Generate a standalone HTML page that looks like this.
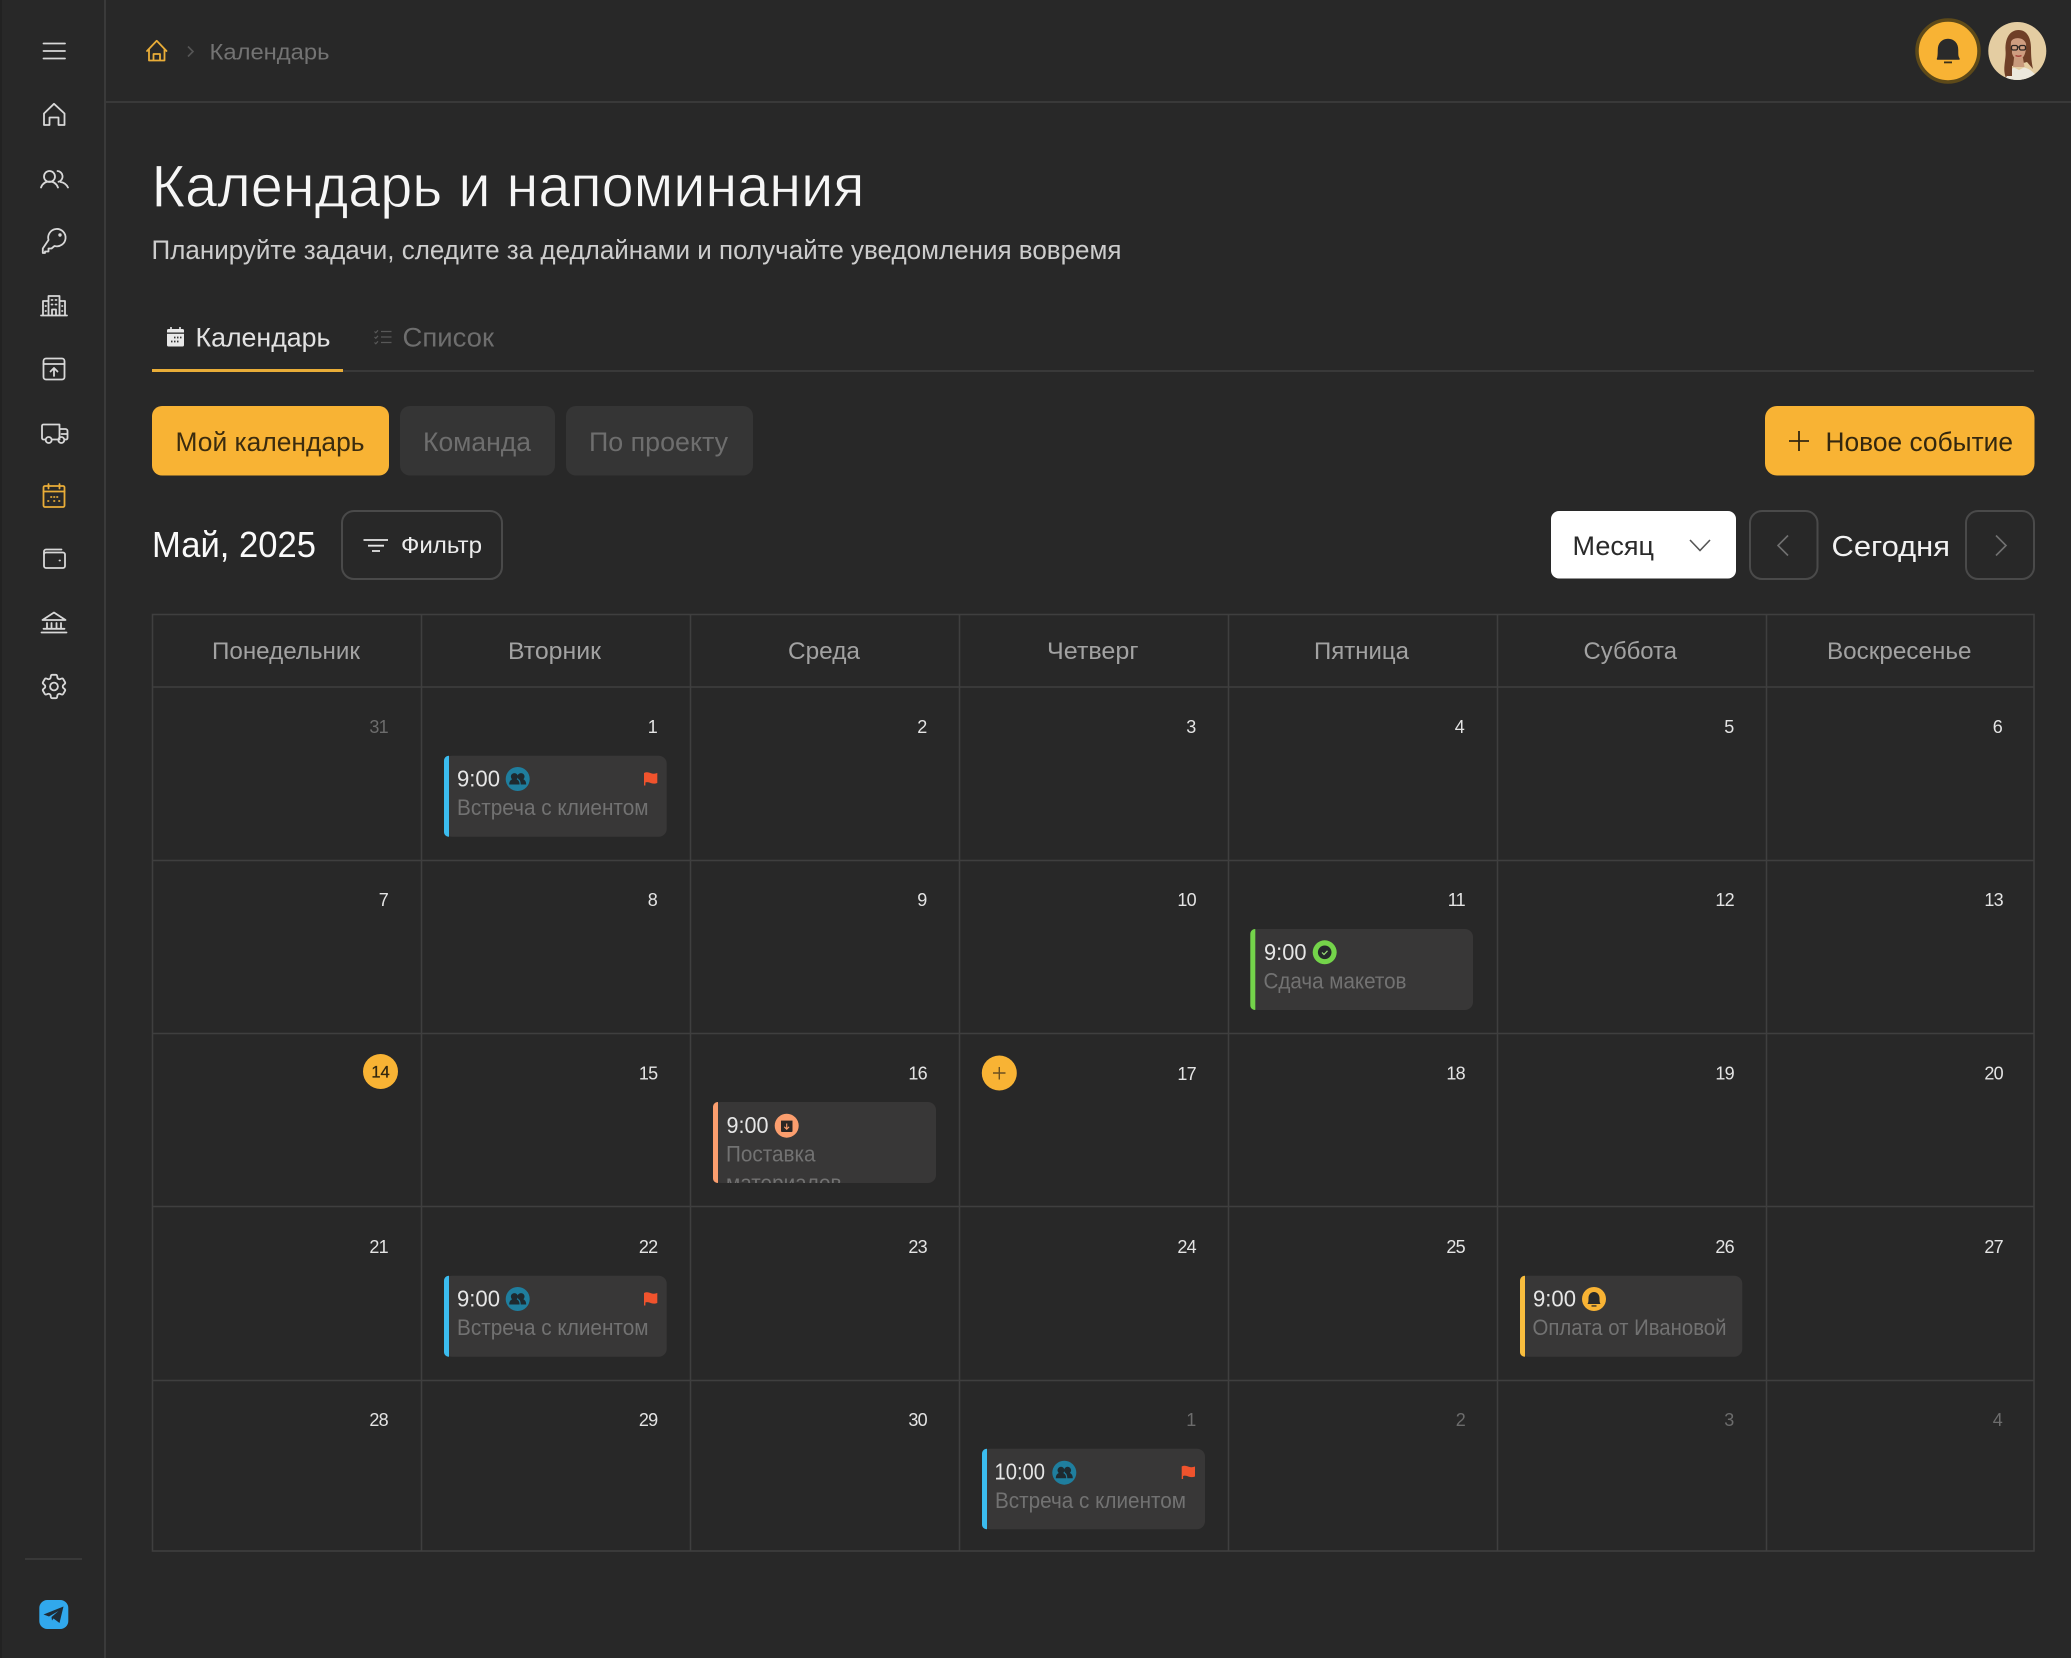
<!DOCTYPE html>
<html lang="ru"><head><meta charset="utf-8"><title>Календарь и напоминания</title>
<style>
html,body{margin:0;padding:0;background:#282828;width:2071px;height:1658px;overflow:hidden}
svg{display:block}
text{font-family:"Liberation Sans","Noto Sans CJK SC",sans-serif}
.ic{fill:none;stroke:#d8d8d8;stroke-width:1.8;stroke-linecap:round;stroke-linejoin:round}
.am{fill:none;stroke:#e9ad38;stroke-width:1.8;stroke-linecap:round;stroke-linejoin:round}
.ln{stroke:#3f3f3f;stroke-width:1.6}
.dh{font-size:24.5px;fill:#a2a2a2}
.n{font-size:18px;fill:#e4e4e4;text-anchor:end;letter-spacing:-.7px}
.m{font-size:18px;fill:#6c6c6c;text-anchor:end;letter-spacing:-.7px}
.tm{font-size:23px;fill:#e6e6e6}
.et{font-size:22px;fill:#727272}
.card{fill:#383737}
</style></head><body>
<svg xmlns="http://www.w3.org/2000/svg" width="2071" height="1658" viewBox="0 0 2071 1658">
<defs>
<clipPath id="av"><circle cx="2017.3" cy="51" r="29"/></clipPath>
<clipPath id="c3"><rect x="713" y="1102" width="223" height="81" rx="8"/></clipPath>
<g id="ppl"><circle cx="-3.300" cy="-2.400" r="3.500" fill="#1e2a30"/><circle cx="3.300" cy="-2.400" r="3.500" fill="#1e2a30"/><path d="M-8.500 5.500c0-4 2.300-5.500 5.200-5.500S1.900 1.500 1.900 5.500zM3 5.500c0-2-.5-4-1.700-5.200.7-.2 1.500-.3 2.300-.3 2.700 0 4.900 1.500 4.900 5.500z" fill="#1e2a30"/></g>
<path id="flag" d="M0 0C3 -1.500 5 -.5 7 .2 9 .9 11 .9 13.300 0V10C11 10.900 9 10.800 7 10.100 5 9.400 3 8.700 1.400 9.500V12.500H0Z" fill="#f0532d"/>
</defs>
<rect width="2071" height="1658" fill="#282828"/>
<rect x="0" y="0" width="2" height="1658" fill="#222"/>

<!-- sidebar -->
<line x1="105" y1="0" x2="105" y2="1658" class="ln"/>
<line x1="106" y1="102" x2="2071" y2="102" class="ln"/>
<g class="ic">
<path d="M43.500 43.500H65M43.500 51H65M43.500 58.500H65"/>
<path d="M44 125V113.500L54 103.800 64.500 113.500V125H58.500V117.500H49.500V125Z"/>
<circle cx="49.500" cy="176.500" r="5.500"/><path d="M41 187.500c1.500-4 4.500-6 8.500-6s7 2 8.500 6M57.500 171a5.500 5.500 0 0 1 1 10.800M60.500 182c3.500.5 6 2.500 7.500 5.500"/>
<path d="M48.500 240a8.700 8.700 0 1 1 6 6l-3 2.500h-3v3h-3.500v1.500H42.800v-4.500z"/><circle cx="60" cy="235" r=".8"/>
<path d="M41 315.500H67M43 315.500V301H48.500M65 315.500V301H59.500M48.500 315.500V296H59.500V315.500M52 315.500V309.500H56V315.500M51.500 300H52.500M55.500 300H56.500M51.500 304.500H52.500M55.500 304.500H56.500M45.500 306H46M62 306H62.500M45.500 311H46M62 311H62.500"/>
<rect x="43.500" y="358.500" width="21" height="21" rx="2.500"/><path d="M43.500 364H64.500M54 376V368M50.500 371.500L54 368 57.500 371.500"/>
<path d="M45.500 439.500H43.500A1.500 1.500 0 0 1 42 438V426A1.500 1.500 0 0 1 43.500 424.500H59.500V439.500H52M59.500 429H65.500A2 2 0 0 1 67.500 431V438A1.500 1.500 0 0 1 66 439.500H65M59.500 439.500H58M67.500 434H61.500"/><circle cx="48.700" cy="440" r="3"/><circle cx="61.300" cy="440" r="3"/>
</g>
<g class="am">
<rect x="43.500" y="486" width="21" height="21" rx="1.500"/><path d="M43.500 491.500H64.500M48.500 484V488.500M59.500 484V488.500M51 497H51.500M54 497H54.500M57 497H57.500M48 501H48.500M54 501H54.500M59 501H59.500"/>
</g>
<g class="ic">
<rect x="44" y="552.500" width="21" height="15.500" rx="2"/><path d="M44 554V551.500A2 2 0 0 1 46 549.500H61.500M59.500 560.500H60"/>
<path d="M42.500 620H65.500L54 612.500ZM47 623V628M51.500 623V628M56.500 623V628M61 623V628M43.500 628.800H64.500M41.500 632.500H66.500"/>
<g transform="translate(38.400 670.900) scale(1.300)" stroke-width="1.400"><path d="M9.594 3.940c.09-.542.56-.94 1.110-.94h2.593c.55 0 1.020.398 1.110.94l.213 1.281c.063.374.313.686.645.87.074.04.147.083.22.127.324.196.72.257 1.075.124l1.217-.456a1.125 1.125 0 011.370.49l1.296 2.247a1.125 1.125 0 01-.26 1.431l-1.003.827c-.293.24-.438.613-.431.992a6.759 6.759 0 010 .255c-.007.378.138.75.43.99l1.005.828c.424.35.534.954.26 1.430l-1.298 2.247a1.125 1.125 0 01-1.369.491l-1.217-.456c-.355-.133-.75-.072-1.076.124a6.570 6.570 0 01-.22.128c-.331.183-.581.495-.644.869l-.213 1.280c-.09.543-.56.941-1.110.941h-2.594c-.55 0-1.020-.398-1.110-.94l-.213-1.281c-.062-.374-.312-.686-.644-.87a6.520 6.520 0 01-.22-.127c-.325-.196-.72-.257-1.076-.124l-1.217.456a1.125 1.125 0 01-1.369-.49l-1.297-2.247a1.125 1.125 0 01.26-1.431l1.004-.827c.292-.24.437-.613.43-.992a6.932 6.932 0 010-.255c.007-.378-.138-.75-.43-.99l-1.004-.828a1.125 1.125 0 01-.26-1.430l1.297-2.247a1.125 1.125 0 011.370-.491l1.216.456c.356.133.751.072 1.076-.124.072-.044.146-.087.22-.128.332-.183.582-.495.644-.869l.214-1.281z"/><circle cx="12" cy="12" r="3"/></g>
</g>
<line x1="25" y1="1559" x2="82" y2="1559" stroke="#3d3d3d" stroke-width="1.500"/>
<rect x="39.300" y="1600" width="29" height="29" rx="8" fill="#31a8ec"/>
<path d="M43.500 1614.500L63.500 1606.500 59.500 1623 53.500 1618.500 52 1620.500 51.500 1617 58.500 1611 49 1616.500Z" fill="#1f2c36"/>

<!-- breadcrumb -->
<path class="am" d="M147 51L156.700 40.800 166.500 51M149 49V60.500H164.500V49M153.500 60.500V54H160V60.500"/>
<path d="M188 46.500L193 51.500 188 56.500" fill="none" stroke="#555" stroke-width="1.600"/>
<text x="209.500" y="59.500" font-size="22" fill="#737373" textLength="120" lengthAdjust="spacingAndGlyphs">Календарь</text>

<!-- bell + avatar -->
<circle cx="1948" cy="51" r="31" fill="#f8b334" stroke="#5e4a19" stroke-width="3.500"/>
<path d="M1937.500 59C1938.500 57 1938.500 55 1938.500 50C1938.500 43.500 1942.500 39.500 1948 39.500S1957.500 43.500 1957.500 50C1957.500 55 1957.500 57 1959 59Z" fill="#2a2a2a" stroke="#2a2a2a" stroke-width="1.500" stroke-linejoin="round"/>
<rect x="1944" y="61.500" width="8" height="1.800" fill="#3a2f18"/>
<g clip-path="url(#av)">
<rect x="1985" y="20" width="64" height="62" fill="#e4cda2"/>
<path d="M2006 78C2002 68 2006.500 60 2005.500 50C2005 38 2010 30 2018.500 30C2027 30 2031 38 2031 48C2031 56 2031.500 62 2033 69L2027 62 2012 66Z" fill="#6f3f27"/>
<path d="M2011 42C2012 37 2024 36 2026 44C2026.500 52 2024 59 2018.500 60.500C2013 60 2010 50 2011 42Z" fill="#cf9d80"/>
<path d="M2014 58L2023 58 2024.500 67 2013 67Z" fill="#c99a7c"/>
<path d="M2005 84C2006 73 2011 69 2014 67.500L2019 70 2024 67.500C2029 68.500 2035 72 2040 82Z" fill="#ece8dd"/>
<path d="M2012 48 L2012 76 L2007 76 C2005 68 2008 58 2012 48Z" fill="#6f3f27"/>
<g fill="none" stroke="#2e2622" stroke-width="1.300"><rect x="2011.500" y="45.500" width="6" height="4.500" rx="1.500"/><rect x="2019.500" y="45.500" width="6" height="4.500" rx="1.500"/><path d="M2017.500 47H2019.500"/></g>
<path d="M2015.500 55.500Q2018.500 57 2021.500 55.500" stroke="#a8443c" stroke-width="1.500" fill="none"/>
</g>

<!-- heading -->
<text x="151.500" y="206.500" font-size="59" fill="#f6f6f6" stroke="#282828" stroke-width=".8" textLength="713" lengthAdjust="spacingAndGlyphs">Календарь и напоминания</text>
<text x="151.500" y="259" font-size="26.500" fill="#cdcdcd" textLength="970" lengthAdjust="spacingAndGlyphs">Планируйте задачи, следите за дедлайнами и получайте уведомления вовремя</text>

<!-- tabs -->
<rect x="167" y="329" width="17" height="17.500" rx="1.500" fill="#e8e8e8"/>
<path d="M171 327V331M180 327V331" stroke="#e8e8e8" stroke-width="1.600"/><rect x="167" y="332.500" width="17" height="1.300" fill="#282828"/>
<path d="M174 337.500h1.500M177 337.500h1.500M180 337.500h1.500M171 341.500h1.500M174 341.500h1.500M177 341.500h1.500" stroke="#333" stroke-width="1.800"/>
<text x="195.500" y="346.500" font-size="26.500" fill="#e2e2e2" textLength="135" lengthAdjust="spacingAndGlyphs">Календарь</text>
<path d="M381 331.500H391.500M381 337H391.500M381 342.500H391.500M374.500 331.500l1.300 1.300 2.200-2.500M374.500 337l1.300 1.300 2.200-2.500M374.500 342.500l1.300 1.300 2.200-2.500" stroke="#585858" stroke-width="1.200" fill="none"/>
<text x="402.500" y="346.500" font-size="26.500" fill="#6e6e6e" textLength="91.500" lengthAdjust="spacingAndGlyphs">Список</text>
<line x1="343" y1="371" x2="2034" y2="371" class="ln"/>
<rect x="152" y="369" width="191" height="3" fill="#e9ad38"/>

<!-- filter buttons -->
<rect x="152" y="406" width="237" height="69.500" rx="10" fill="#f8b334"/>
<text x="175.500" y="451" font-size="27" fill="#3b2c0f" textLength="189" lengthAdjust="spacingAndGlyphs">Мой календарь</text>
<rect x="400" y="406" width="155" height="69.500" rx="10" fill="#353535"/>
<text x="423" y="451" font-size="27" fill="#6e6e6e" textLength="108" lengthAdjust="spacingAndGlyphs">Команда</text>
<rect x="566" y="406" width="187" height="69.500" rx="10" fill="#353535"/>
<text x="589" y="451" font-size="27" fill="#6e6e6e" textLength="139" lengthAdjust="spacingAndGlyphs">По проекту</text>
<rect x="1765" y="406" width="269.500" height="69.500" rx="12" fill="#f8b334"/>
<path d="M1789 441H1809M1799 431V451" stroke="#33270f" stroke-width="1.800"/>
<text x="1825.500" y="451" font-size="27" fill="#33270f" textLength="187.500" lengthAdjust="spacingAndGlyphs">Новое событие</text>

<!-- toolbar -->
<text x="152" y="557" font-size="36" fill="#fafafa" textLength="164" lengthAdjust="spacingAndGlyphs">Май, 2025</text>
<rect x="342" y="511" width="160" height="68" rx="12" fill="none" stroke="#4a4a4a" stroke-width="2"/>
<path d="M363.500 540H388M368 545.700H384M372 551H380" stroke="#e6e6e6" stroke-width="1.800"/>
<text x="401" y="553" font-size="23" fill="#ececec" textLength="81" lengthAdjust="spacingAndGlyphs">Фильтр</text>
<rect x="1551" y="511" width="185" height="67.500" rx="8" fill="#fff"/>
<text x="1572.500" y="555" font-size="27" fill="#2a2a2a" textLength="81.500" lengthAdjust="spacingAndGlyphs">Месяц</text>
<path d="M1690 540L1700 550.500 1710 540" fill="none" stroke="#555" stroke-width="1.600"/>
<rect x="1750" y="511" width="67.500" height="68" rx="12" fill="none" stroke="#4a4a4a" stroke-width="2"/>
<path d="M1788 535.500L1778 545.500 1788 555.500" fill="none" stroke="#707070" stroke-width="1.600"/>
<text x="1831.500" y="556" font-size="29" fill="#f2f2f2" textLength="118.500" lengthAdjust="spacingAndGlyphs">Сегодня</text>
<rect x="1966" y="511" width="68" height="68" rx="12" fill="none" stroke="#4a4a4a" stroke-width="2"/>
<path d="M1996 535.500L2006 545.500 1996 555.500" fill="none" stroke="#707070" stroke-width="1.600"/>

<!-- grid -->
<rect x="152.500" y="614.500" width="1881.500" height="936.500" fill="none" class="ln"/>
<path class="ln" fill="none" d="M421.500 615V1551M690.500 615V1551M959.500 615V1551M1228.500 615V1551M1497.500 615V1551M1766.500 615V1551M153 687H2034M153 860.500H2034M153 1033.500H2034M153 1206.500H2034M153 1380.500H2034"/>
<text class="dh" x="212" y="659" textLength="148" lengthAdjust="spacingAndGlyphs">Понедельник</text>
<text class="dh" x="508" y="659" textLength="93" lengthAdjust="spacingAndGlyphs">Вторник</text>
<text class="dh" x="788" y="659" textLength="72" lengthAdjust="spacingAndGlyphs">Среда</text>
<text class="dh" x="1047" y="659" textLength="91.500" lengthAdjust="spacingAndGlyphs">Четверг</text>
<text class="dh" x="1314" y="659" textLength="95" lengthAdjust="spacingAndGlyphs">Пятница</text>
<text class="dh" x="1583.500" y="659" textLength="93.500" lengthAdjust="spacingAndGlyphs">Суббота</text>
<text class="dh" x="1827" y="659" textLength="144.500" lengthAdjust="spacingAndGlyphs">Воскресенье</text>

<text class="m" x="388" y="733">31</text><text class="n" x="657" y="733">1</text><text class="n" x="926.500" y="733">2</text><text class="n" x="1195.500" y="733">3</text><text class="n" x="1464" y="733">4</text><text class="n" x="1733.500" y="733">5</text><text class="n" x="2002" y="733">6</text>
<text class="n" x="388" y="906">7</text><text class="n" x="657" y="906">8</text><text class="n" x="926.500" y="906">9</text><text class="n" x="1196" y="906">10</text><text class="n" x="1465" y="906">11</text><text class="n" x="1734" y="906">12</text><text class="n" x="2003" y="906">13</text>
<circle cx="380.500" cy="1071.500" r="17.500" fill="#f8b334"/><text x="380.500" y="1077.500" font-size="16.500" fill="#33270f" stroke="#33270f" stroke-width=".3" text-anchor="middle">14</text>
<text class="n" x="657.500" y="1079.500">15</text><text class="n" x="927" y="1079.500">16</text><text class="n" x="1196" y="1080">17</text><text class="n" x="1465" y="1079.500">18</text><text class="n" x="1734" y="1079.500">19</text><text class="n" x="2003" y="1079.500">20</text>
<text class="n" x="388" y="1253">21</text><text class="n" x="657.500" y="1253">22</text><text class="n" x="927" y="1253">23</text><text class="n" x="1196" y="1253">24</text><text class="n" x="1465" y="1253">25</text><text class="n" x="1734" y="1253">26</text><text class="n" x="2003" y="1253">27</text>
<text class="n" x="388" y="1426">28</text><text class="n" x="657.500" y="1426">29</text><text class="n" x="927" y="1426">30</text><text class="m" x="1195.500" y="1426">1</text><text class="m" x="1465" y="1426">2</text><text class="m" x="1733.500" y="1426">3</text><text class="m" x="2002" y="1426">4</text>
<circle cx="999.300" cy="1073" r="17.500" fill="#f8b334"/><path d="M993 1073H1005.500M999.300 1067V1079.500" stroke="#6a5020" stroke-width="1.400"/>

<!-- event 1 -->
<rect class="card" x="444" y="755.700" width="222.700" height="81" rx="8"/>
<path d="M449 755.700V836.700C446 836.700 444 834.700 444 832V760.700C444 758 446 755.700 449 755.700Z" fill="#3bbcef"/>
<text class="tm" x="457" y="786.500" textLength="43" lengthAdjust="spacingAndGlyphs">9:00</text>
<circle cx="517.700" cy="779" r="12" fill="#1f7e9e"/><use href="#ppl" x="517.700" y="779"/>
<use href="#flag" x="644" y="773"/>
<text class="et" x="457" y="815" textLength="191.500" lengthAdjust="spacingAndGlyphs">Встреча с клиентом</text>

<!-- event 2 -->
<rect class="card" x="1250.300" y="929" width="222.700" height="81" rx="8"/>
<path d="M1255.300 929V1010C1252.300 1010 1250.300 1008 1250.300 1005.300V934C1250.300 931.300 1252.300 929 1255.300 929Z" fill="#74d44a"/>
<text class="tm" x="1264" y="960" textLength="42.500" lengthAdjust="spacingAndGlyphs">9:00</text>
<circle cx="1324.700" cy="952.300" r="12" fill="#74d44a"/><circle cx="1324.700" cy="952.300" r="6.800" fill="#24282a"/>
<path d="M1322 952.500L1324 954.500 1327.500 950.800" fill="none" stroke="#9ae07a" stroke-width="1.200"/>
<text class="et" x="1263.500" y="988.500" textLength="143" lengthAdjust="spacingAndGlyphs">Сдача макетов</text>

<!-- event 3 -->
<rect class="card" x="713" y="1102" width="223" height="81" rx="8"/>
<path d="M718 1102V1183C715 1183 713 1181 713 1178.300V1107C713 1104.300 715 1102 718 1102Z" fill="#fb9e6e"/>
<text class="tm" x="726.500" y="1133" textLength="42" lengthAdjust="spacingAndGlyphs">9:00</text>
<circle cx="786.700" cy="1125.700" r="12" fill="#fb9e6e"/>
<rect x="781" y="1119" width="11.500" height="13" rx="1" fill="#2a2624"/><rect x="780.500" y="1119" width="12.500" height="1.600" fill="#fb9e6e"/>
<path d="M786.700 1123.500V1129M784.300 1126.800L786.700 1129.200 789.100 1126.800" fill="none" stroke="#fb9e6e" stroke-width="1.100"/>
<text class="et" x="726" y="1161.700" textLength="89.500" lengthAdjust="spacingAndGlyphs">Поставка</text>
<g clip-path="url(#c3)"><text class="et" x="726" y="1190.700" textLength="115.500" lengthAdjust="spacingAndGlyphs">материалов</text></g>

<!-- event 4 -->
<rect class="card" x="1520" y="1275.700" width="222.300" height="81" rx="8"/>
<path d="M1525 1275.700V1356.700C1522 1356.700 1520 1354.700 1520 1352V1280.700C1520 1278 1522 1275.700 1525 1275.700Z" fill="#f8bd3e"/>
<text class="tm" x="1533" y="1306.500" textLength="43" lengthAdjust="spacingAndGlyphs">9:00</text>
<circle cx="1594" cy="1299" r="12" fill="#f8b334"/>
<path d="M1587.500 1304C1588.500 1302.500 1588.500 1300.500 1588.500 1298C1588.500 1294.500 1590.800 1292 1594 1292S1599.500 1294.500 1599.500 1298C1599.500 1300.500 1599.500 1302.500 1600.500 1304Z" fill="#2a2a2a"/><rect x="1591.500" y="1305.300" width="5" height="1.300" fill="#2a2a2a"/>
<text class="et" x="1532.500" y="1335" textLength="194" lengthAdjust="spacingAndGlyphs">Оплата от Ивановой</text>

<!-- event 5 -->
<rect class="card" x="982" y="1448.700" width="223" height="80.500" rx="8"/>
<path d="M987 1448.700V1529.200C984 1529.200 982 1527.200 982 1524.500V1453.700C982 1451 984 1448.700 987 1448.700Z" fill="#3bbcef"/>
<text class="tm" x="994.500" y="1479.500" textLength="50.500" lengthAdjust="spacingAndGlyphs">10:00</text>
<circle cx="1064.300" cy="1472.700" r="12" fill="#1f7e9e"/><use href="#ppl" x="1064.300" y="1472.700"/>
<use href="#flag" x="1181.700" y="1466.500"/>
<text class="et" x="995" y="1508" textLength="191" lengthAdjust="spacingAndGlyphs">Встреча с клиентом</text>

<!-- event 22 -->
<rect class="card" x="444" y="1275.700" width="222.700" height="81" rx="8"/>
<path d="M449 1275.700V1356.700C446 1356.700 444 1354.700 444 1352V1280.700C444 1278 446 1275.700 449 1275.700Z" fill="#3bbcef"/>
<text class="tm" x="457" y="1306.500" textLength="43" lengthAdjust="spacingAndGlyphs">9:00</text>
<circle cx="517.700" cy="1299" r="12" fill="#1f7e9e"/><use href="#ppl" x="517.700" y="1299"/>
<use href="#flag" x="644" y="1293"/>
<text class="et" x="457" y="1335" textLength="191.500" lengthAdjust="spacingAndGlyphs">Встреча с клиентом</text>
</svg>
</body></html>
